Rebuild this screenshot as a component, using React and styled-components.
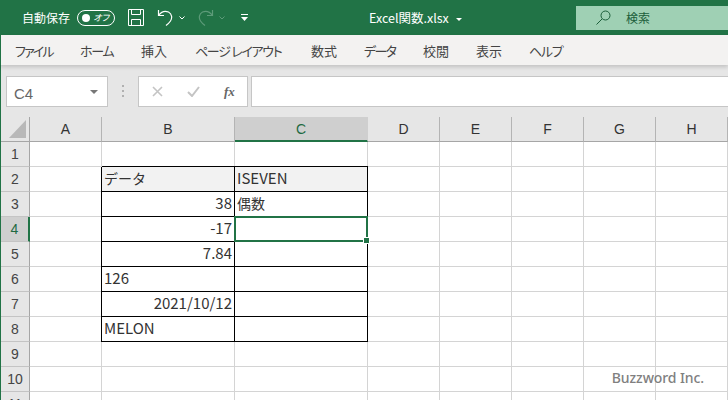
import React from "react";
import styled, { createGlobalStyle } from "styled-components";

const UI_FONT = `"Noto Sans CJK JP", "Noto Sans", sans-serif`;
const CELL_FONT = `"Noto Sans CJK JP", "Liberation Sans", sans-serif`;

const GlobalStyle = createGlobalStyle`
	html, body {
		margin: 0;
		padding: 0;
		background: #fff;
	}
	body {
		width: 728px;
		height: 400px;
		overflow: hidden;
		font-family: ${UI_FONT};
	}
`;

const Page = styled.div`
	position: relative;
	width: 728px;
	height: 400px;
	overflow: hidden;
	background: #fff;
`;

const TitleBar = styled.div`
	display: flex;
	align-items: center;
	height: 35px;
	background: #217346;
	color: #fff;
`;

const AutoSave = styled.span`
	margin-left: 22px;
	font-size: 12px;
`;

const Toggle = styled.div`
	display: flex;
	align-items: center;
	justify-content: space-between;
	box-sizing: border-box;
	width: 38px;
	height: 16px;
	margin-left: 7px;
	padding: 0 5px 0 4px;
	border: 1px solid #fff;
	border-radius: 8px;
	font-size: 9px;
	font-style: italic;
	font-feature-settings: "palt";
`;

const Knob = styled.i`
	width: 8px;
	height: 8px;
	border-radius: 50%;
	background: #fff;
`;

const QuickIcons = styled.div`
	display: flex;
	align-items: center;
	margin-left: 13px;
`;

const QuickIcon = styled.svg`
	display: block;
	flex: none;
	margin-left: ${(p) => p.$gap || 0}px;
`;

const FileName = styled.div`
	margin-left: 121px;
	font-size: 12.5px;
	white-space: nowrap;
`;

const Caret = styled.span`
	display: inline-block;
	margin-left: 7px;
	vertical-align: 2px;
	border-left: 3px solid transparent;
	border-right: 3px solid transparent;
	border-top: 3px solid #fff;
`;

const SearchBox = styled.div`
	display: flex;
	align-items: center;
	align-self: flex-start;
	width: 152px;
	height: 24px;
	margin-left: auto;
	margin-top: 6px;
	padding-bottom: 1px;
	box-sizing: border-box;
	background: #9fd0b4;
	color: #1c5e3a;
	font-size: 12px;
`;

const SearchIcon = styled.svg`
	margin: 0 15px 0 20px;
`;

const TabBar = styled.div`
	display: flex;
	align-items: center;
	box-sizing: border-box;
	height: 30px;
	padding-left: 14px;
	background: #f3f2f1;
	border-left: 1px solid #217346;
	box-shadow: 0 2px 4px rgba(0, 0, 0, 0.16);
	position: relative;
	color: #444;
	font-size: 13px;
	font-feature-settings: "palt";
`;

const Tab = styled.span`
	flex: none;
	width: ${(p) => p.$width}px;
	letter-spacing: ${(p) => p.$spacing || 0}px;
	white-space: nowrap;
`;

const FormulaRow = styled.div`
	display: flex;
	align-items: flex-start;
	box-sizing: border-box;
	height: 52px;
	padding: 11px 0 0 5px;
	background: #e6e6e6;
	border-left: 1px solid #217346;
`;

const NameBox = styled.div`
	display: flex;
	align-items: center;
	justify-content: space-between;
	box-sizing: border-box;
	width: 102px;
	height: 31px;
	padding: 3px 9px 0 7px;
	background: #fff;
	border: 1px solid #c6c6c6;
	color: #666;
	font-family: "Liberation Sans", sans-serif;
	font-size: 15px;
`;

const NameCaret = styled.span`
	margin-top: -3px;
	border-left: 4px solid transparent;
	border-right: 4px solid transparent;
	border-top: 4px solid #777;
`;

const Dots = styled.div`
	display: grid;
	gap: 3px;
	margin: 9px 14px 0 14px;
`;

const Dot = styled.i`
	width: 2px;
	height: 2px;
	background: #b0b0b0;
`;

const FormulaButtons = styled.div`
	display: flex;
	align-items: center;
	box-sizing: border-box;
	width: 110px;
	height: 31px;
	padding-left: 13px;
	background: #fff;
	border: 1px solid #c6c6c6;
`;

const FormulaIcon = styled.svg`
	flex: none;
	margin-right: ${(p) => p.$gap || 0}px;
`;

const FxLabel = styled.span`
	color: #666;
	font-family: "Liberation Serif", serif;
	font-size: 13px;
	font-style: italic;
	font-weight: bold;
`;

const FormulaInput = styled.div`
	flex: 1;
	height: 31px;
	box-sizing: border-box;
	margin-left: 3px;
	background: #fff;
	border: 1px solid #c6c6c6;
	border-right: 0;
`;

const Sheet = styled.div`
	display: grid;
	grid-template-columns: 29px 72px 133px 133px repeat(5, 72px);
	grid-auto-rows: 25px;
	border-left: 1px solid #217346;
	width: 728px;
	box-sizing: border-box;
`;

const Corner = styled.div`
	position: relative;
	background: #e6e6e6;
	border-right: 1px solid #a6a6a6;
	border-bottom: 1px solid #a6a6a6;
	box-sizing: border-box;
`;

const CornerMark = styled.svg`
	position: absolute;
	right: 3px;
	bottom: 3px;
`;

const ColHead = styled.div`
	display: flex;
	align-items: center;
	justify-content: center;
	box-sizing: border-box;
	background: ${(p) => (p.$active ? "#cfcfcf" : "#e6e6e6")};
	border-right: 1px solid ${(p) => (p.$active ? "#cfcfcf" : "#b4b4b4")};
	border-bottom: ${(p) => (p.$active ? "2px solid #217346" : "1px solid #a6a6a6")};
	color: ${(p) => (p.$active ? "#1f6a42" : "#333")};
	font-family: "Liberation Sans", sans-serif;
	font-size: 14px;
`;

const RowHead = styled.div`
	display: flex;
	align-items: center;
	justify-content: center;
	box-sizing: border-box;
	background: ${(p) => (p.$active ? "#cfcfcf" : "#e6e6e6")};
	border-right: ${(p) => (p.$active ? "2px solid #217346" : "1px solid #a6a6a6")};
	border-bottom: 1px solid #c4c4c4;
	color: ${(p) => (p.$active ? "#1f6a42" : "#444")};
	font-family: "Liberation Sans", sans-serif;
	font-size: 14px;
`;

const Cell = styled.div`
	position: relative;
	display: flex;
	align-items: center;
	justify-content: ${(p) => (p.$right ? "flex-end" : "flex-start")};
	box-sizing: border-box;
	padding: 0 2px 3px;
	background: ${(p) => (p.$shade ? "#f2f2f2" : "#fff")};
	border-right: 1px solid ${(p) => (p.$boxRight ? "#000" : "#d4d4d4")};
	border-bottom: 1px solid ${(p) => (p.$boxBottom ? "#000" : "#d4d4d4")};
	box-shadow: ${(p) =>
		[p.$boxLeft && "-1px 0 0 #000", p.$boxTop && "0 -1px 0 #000"]
			.filter(Boolean)
			.join(", ") || "none"};
	color: #333;
	font-family: ${CELL_FONT};
	font-size: ${(p) => (p.$cjk ? 14 : 15)}px;
	white-space: nowrap;
`;

const Selection = styled.div`
	position: absolute;
	z-index: 2;
	left: -1px;
	top: -1px;
	right: -1px;
	bottom: -1px;
	border: 2px solid #217346;
`;

const FillHandle = styled.i`
	position: absolute;
	z-index: 3;
	right: -3px;
	bottom: -3px;
	width: 5px;
	height: 5px;
	background: #217346;
	outline: 1px solid #fff;
`;

const Watermark = styled.div`
	position: absolute;
	z-index: 4;
	right: 24px;
	bottom: 13px;
	color: #808080;
	font-family: "Noto Sans", sans-serif;
	font-size: 14px;
	font-weight: 500;
	letter-spacing: -0.1px;
`;

const tabs = [
	{ label: "ファイル", width: 65, spacing: -1.8 },
	{ label: "ホーム", width: 61, spacing: -1.3 },
	{ label: "挿入", width: 54 },
	{ label: "ページ レイアウト", width: 116, spacing: -1.3 },
	{ label: "数式", width: 53 },
	{ label: "データ", width: 59, spacing: -1.7 },
	{ label: "校閲", width: 53 },
	{ label: "表示", width: 53 },
	{ label: "ヘルプ", width: 50, spacing: -1.3 },
];

const columns = ["A", "B", "C", "D", "E", "F", "G", "H"];

// B2:C8 の中身
const tableRows = {
	2: { b: { text: "データ", cjk: true }, c: { text: "ISEVEN" } },
	3: { b: { text: "38", right: true }, c: { text: "偶数", cjk: true } },
	4: { b: { text: "-17", right: true }, c: { text: "", selected: true } },
	5: { b: { text: "7.84", right: true }, c: { text: "" } },
	6: { b: { text: "126" }, c: { text: "" } },
	7: { b: { text: "2021/10/12", right: true }, c: { text: "" } },
	8: { b: { text: "MELON" }, c: { text: "" } },
};

const rowNumbers = [1, 2, 3, 4, 5, 6, 7, 8, 9, 10, 11];

const App = () => {
	const renderRow = (n) => {
		const row = tableRows[n];
		const active = n === 4;
		return (
			<React.Fragment key={n}>
				<RowHead $active={active}>{n}</RowHead>
				<Cell />
				<Cell
					$right={row && row.b.right}
					$cjk={row && row.b.cjk}
					$shade={n === 2}
					$boxLeft={!!row}
					$boxTop={n === 2}
					$boxRight={!!row}
					$boxBottom={!!row}>
					{row && row.b.text}
				</Cell>
				<Cell
					$cjk={row && row.c.cjk}
					$shade={n === 2}
					$boxTop={n === 2}
					$boxRight={!!row}
					$boxBottom={!!row}>
					{row && row.c.text}
					{row && row.c.selected && (
						<Selection>
							<FillHandle />
						</Selection>
					)}
				</Cell>
				{columns.slice(3).map((c) => (
					<Cell key={c} />
				))}
			</React.Fragment>
		);
	};

	return (
		<Page>
			<GlobalStyle />
			<TitleBar>
				<AutoSave>自動保存</AutoSave>
				<Toggle>
					<Knob />
					オフ
				</Toggle>
				<QuickIcons>
					<QuickIcon width='16' height='17' viewBox='0 0 16 17' fill='none' stroke='#fff'>
						<path d='M.5.5h15v16H.5zM3.5.5v5h9v-5M3.5 16.5v-6h9v6' />
					</QuickIcon>
					<QuickIcon $gap={13} width='17' height='17' viewBox='0 0 17 17' fill='none' stroke='#fff' strokeWidth='1.2'>
						<path d='M1.5 1v5.5h5.500M1.500 6.500C4 3 8 1.500 11.500 3c3.500 2 4 6 2 9-1 1.500-2.500 3-4.500 4.500' />
					</QuickIcon>
					<QuickIcon $gap={5} width='6' height='4' viewBox='0 0 6 4' fill='none' stroke='#fff'>
						<path d='M.5.5 3 3 5.500.5' />
					</QuickIcon>
					<QuickIcon $gap={13} width='16' height='17' viewBox='0 0 16 17' fill='none' stroke='#5d9b79' strokeWidth='1.2'>
						<path d='M14.500 1v5.500H9M14.500 6.500C12 3 8 1.500 4.500 3c-3.500 2-4 6-2 9 1 1.500 2.500 3 4.500 4.500' />
					</QuickIcon>
					<QuickIcon $gap={5} width='6' height='4' viewBox='0 0 6 4' fill='none' stroke='#5d9b79'>
						<path d='M.5.5 3 3 5.500.5' />
					</QuickIcon>
					<QuickIcon $gap={16} width='7' height='7' viewBox='0 0 7 7' fill='#fff'>
						<path d='M0 0h7v1H0zM0 3h7L3.500 7z' />
					</QuickIcon>
				</QuickIcons>
				<FileName>
					Excel関数.xlsx
					<Caret />
				</FileName>
				<SearchBox>
					<SearchIcon width='15' height='15' viewBox='0 0 15 15' fill='none' stroke='#1c5e3a'>
						<circle cx='9.500' cy='5.500' r='4.500' />
						<path d='M6 9 .5 14.500' />
					</SearchIcon>
					検索
				</SearchBox>
			</TitleBar>
			<TabBar>
				{tabs.map((t) => (
					<Tab key={t.label} $width={t.width} $spacing={t.spacing}>
						{t.label}
					</Tab>
				))}
			</TabBar>
			<FormulaRow>
				<NameBox>
					C4
					<NameCaret />
				</NameBox>
				<Dots>
					<Dot />
					<Dot />
					<Dot />
				</Dots>
				<FormulaButtons>
					<FormulaIcon $gap={24} width='11' height='11' viewBox='0 0 11 11' fill='none' stroke='#c4c4c4' strokeWidth='1.600'>
						<path d='m1 1 9 9M10 1l-9 9' />
					</FormulaIcon>
					<FormulaIcon $gap={24} width='13' height='11' viewBox='0 0 13 11' fill='none' stroke='#c4c4c4' strokeWidth='2'>
						<path d='m1 6 4 4 7-9' />
					</FormulaIcon>
					<FxLabel>fx</FxLabel>
				</FormulaButtons>
				<FormulaInput />
			</FormulaRow>
			<Sheet>
				<Corner>
					<CornerMark width='17' height='18' viewBox='0 0 17 18' fill='#b8b8b8'>
						<path d='M17 0v18H0z' />
					</CornerMark>
				</Corner>
				{columns.map((c) => (
					<ColHead key={c} $active={c === "C"}>
						{c}
					</ColHead>
				))}
				{rowNumbers.map(renderRow)}
			</Sheet>
			<Watermark>Buzzword Inc.</Watermark>
		</Page>
	);
};

export default App;
